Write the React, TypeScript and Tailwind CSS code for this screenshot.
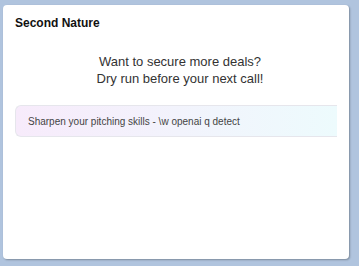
export default function App() {
  return (
    <div className="w-[359px] h-[266px] bg-[#b0c4de] pt-[5px] pl-[3px] flex items-start font-['Liberation_Sans',Arial,sans-serif]">
      <div className="w-[346px] shrink-0 h-[254px] bg-white rounded-[4px] shadow-[1px_1px_2px_rgba(0,0,0,0.3)] px-3 pt-[11px] overflow-hidden">
        <h1 className="text-[12px] font-bold text-[#111] leading-[14px]">Second Nature</h1>
        <div className="mt-[23px] pl-[8px] text-center text-[13px] leading-[17px] text-[#333]">
          <p>Want to secure more deals?</p>
          <p>Dry run before your next call!</p>
        </div>
        <div className="mt-[18px] h-[32px] flex items-center pl-3 rounded-l-[6px] border border-r-0 border-[#e6e6ec] bg-gradient-to-r from-[#f7ebfb] to-[#edfbfd] text-[10px] text-[#444]">
          Sharpen your pitching skills - \w openai q detect
        </div>
      </div>
    </div>
  );
}
